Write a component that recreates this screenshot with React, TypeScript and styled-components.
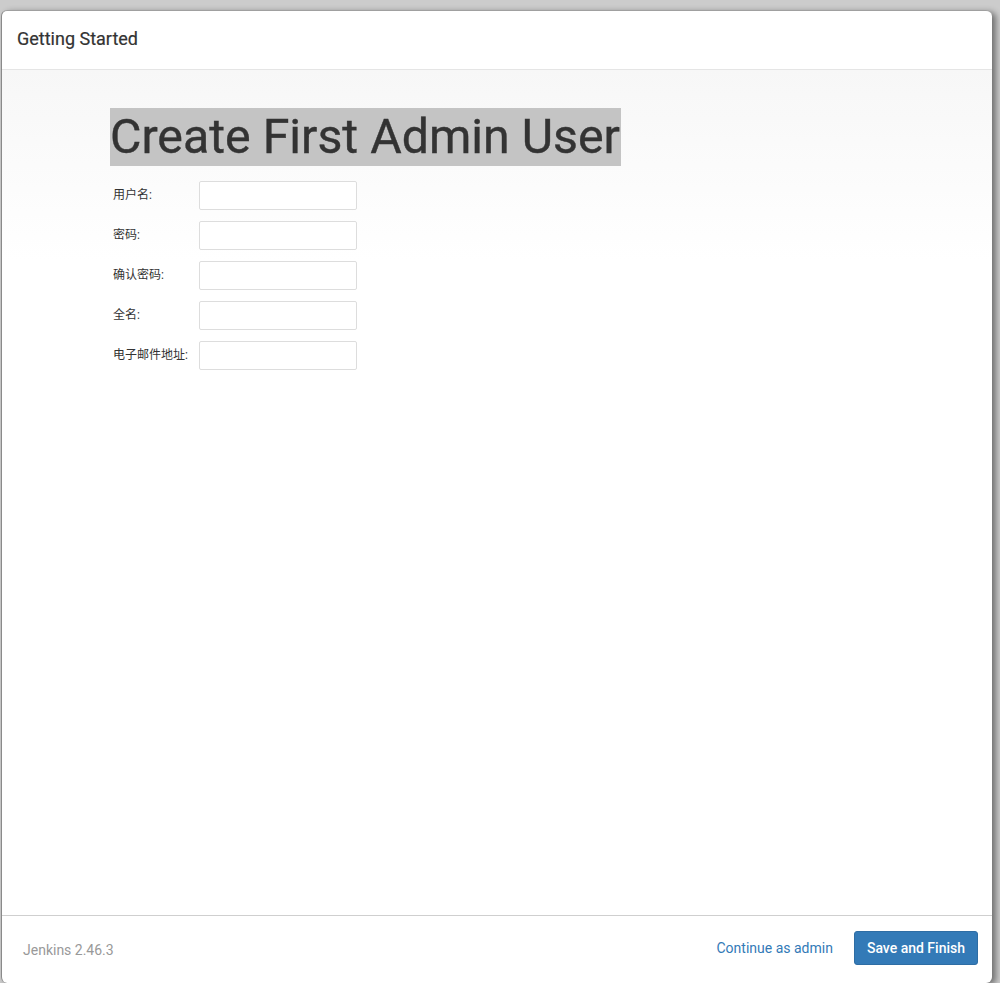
import React from "react";
import styled, { createGlobalStyle } from "styled-components";

const GlobalStyle = createGlobalStyle`
  html, body {
    margin: 0;
    padding: 0;
    background: #cccccc;
    font-family: Roboto, "Noto Sans CJK SC", "Liberation Sans", sans-serif;
    color: #333333;
  }
  #root {
    height: 983px;
    overflow: hidden;
  }
`;

const Page = styled.div`
  height: 983px;
  padding: 10px 8px 0 1px;
  box-sizing: border-box;
`;

const Modal = styled.div`
  height: 972px;
  display: flex;
  flex-direction: column;
  background: #ffffff;
  border-radius: 6px;
  border-left: 1px solid #8a8a8a;
  border-top: 1px solid #a0a0a0;
  box-shadow: 4px 2px 6px rgba(0, 0, 0, 0.45);
  overflow: hidden;
`;

const Header = styled.div`
  height: 59px;
  box-sizing: border-box;
  padding: 16px 15px 0;
  border-bottom: 1px solid #e5e5e5;
  font-size: 18px;
  font-weight: 400;
  line-height: 24px;
  color: #333333;
  -webkit-text-stroke: 0.2px #333333;
`;

const Body = styled.div`
  flex: 1;
  padding: 38px 0 0 108px;
  background: linear-gradient(to bottom, #f7f7f7 0px, #ffffff 190px);
`;

const Title = styled.h1`
  display: inline-block;
  margin: 0 0 15px;
  padding: 0 1px 0 0;
  font-size: 48.3px;
  font-weight: 400;
  line-height: 58px;
  background: #c4c4c4;
  color: #333333;
  -webkit-text-stroke: 0.4px #333333;
`;

const Form = styled.div`
  display: flex;
  flex-direction: column;
  gap: 11px;
  padding-left: 3px;
`;

const Row = styled.label`
  display: flex;
  align-items: center;
  height: 29px;
`;

const Label = styled.span`
  width: 86px;
  font-size: 12px;
  color: #333333;
  margin-top: -5px;
`;

const Input = styled.input`
  width: 158px;
  height: 29px;
  box-sizing: border-box;
  border: 1px solid #dddddd;
  border-radius: 2px;
  background: #ffffff;
  outline: none;
`;

const Footer = styled.div`
  height: 68px;
  box-sizing: border-box;
  display: flex;
  align-items: center;
  padding: 0 14px 3px 21px;
  border-top: 1px solid #cfcfcf;
`;

const Version = styled.span`
  font-size: 14px;
  color: #999999;
  margin-top: 3px;
  flex: 1;
`;

const LinkButton = styled.a`
  font-size: 14px;
  color: #337ab7;
  text-decoration: none;
  margin-right: 21px;
  cursor: pointer;
`;

const PrimaryButton = styled.button`
  height: 34px;
  padding: 0 12px;
  font-family: inherit;
  font-size: 14px;
  font-weight: 500;
  color: #ffffff;
  background: #337ab7;
  border: 1px solid #2e6da4;
  border-radius: 3px;
  cursor: pointer;
`;

const fields = ["用户名:", "密码:", "确认密码:", "全名:", "电子邮件地址:"];

export default function App() {
  return (
    <Page>
      <GlobalStyle />
      <Modal>
        <Header>Getting Started</Header>
        <Body>
          <Title>Create First Admin User</Title>
          <Form>
            {fields.map((f, i) => (
              <Row key={f}>
                <Label>{f}</Label>
                <Input type={i === 1 || i === 2 ? "password" : "text"} />
              </Row>
            ))}
          </Form>
        </Body>
        <Footer>
          <Version>Jenkins 2.46.3</Version>
          <LinkButton>Continue as admin</LinkButton>
          <PrimaryButton>Save and Finish</PrimaryButton>
        </Footer>
      </Modal>
    </Page>
  );
}
